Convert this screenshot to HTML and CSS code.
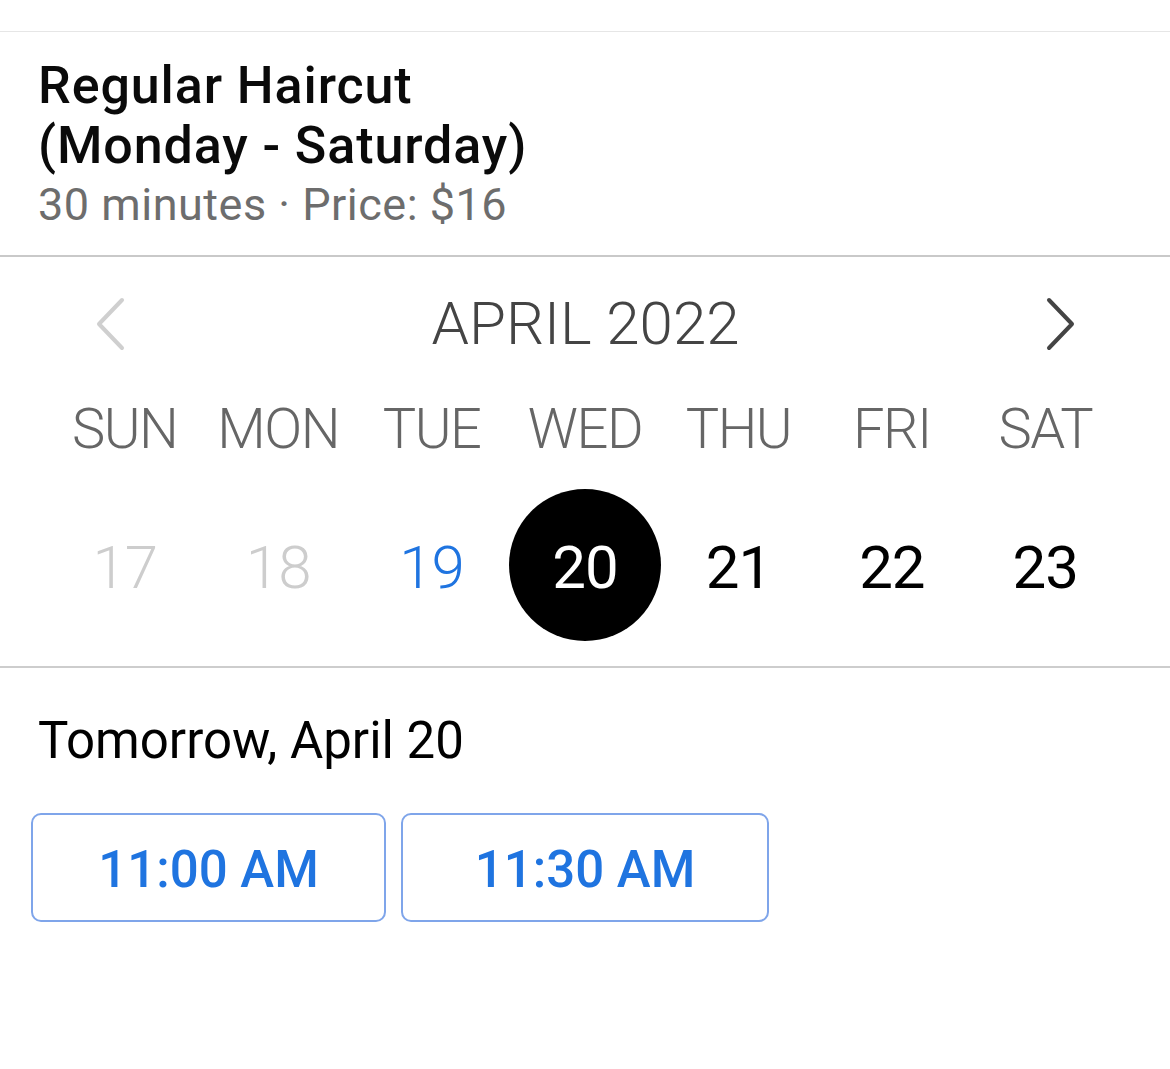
FILE: index.html
```html
<!DOCTYPE html>
<html lang="en">
<head>
    <meta charset="UTF-8">
    <meta name="viewport" content="width=device-width, initial-scale=1.0">
    <title>Book appointment</title>
    <link rel="stylesheet" href="styles.css">
</head>
<body>
    <div class="page">
        <div class="service">
            <div class="service-title">Regular Haircut<br>(Monday - Saturday)</div>
            <div class="service-meta">30 minutes · Price: $16</div>
        </div>

        <div class="calendar">
            <div class="month-bar">
                <button class="nav nav-prev" aria-label="Previous month">
                    <svg viewBox="0 0 32 54" width="32" height="54"><path d="M28 3 L5 27 L28 51" fill="none" stroke="currentColor" stroke-width="4" stroke-linecap="round" stroke-linejoin="round"/></svg>
                </button>
                <div class="month">APRIL 2022</div>
                <button class="nav nav-next" aria-label="Next month">
                    <svg viewBox="0 0 32 54" width="32" height="54"><path d="M4 3 L27 27 L4 51" fill="none" stroke="currentColor" stroke-width="4" stroke-linecap="round" stroke-linejoin="round"/></svg>
                </button>
            </div>

            <div class="week">
                <div class="weekday">SUN</div>
                <div class="weekday">MON</div>
                <div class="weekday">TUE</div>
                <div class="weekday">WED</div>
                <div class="weekday">THU</div>
                <div class="weekday">FRI</div>
                <div class="weekday">SAT</div>
            </div>

            <div class="week days">
                <div class="day day-past">17</div>
                <div class="day day-past">18</div>
                <div class="day day-today">19</div>
                <div class="day"><span class="day-selected">20</span></div>
                <div class="day">21</div>
                <div class="day">22</div>
                <div class="day">23</div>
            </div>
        </div>

        <div class="slots">
            <div class="slots-date">Tomorrow, April 20</div>
            <div class="slot-list">
                <button class="slot">11:00 AM</button>
                <button class="slot slot-wide">11:30 AM</button>
            </div>
        </div>
    </div>
</body>
</html>
```

FILE: styles.css
```css
* { margin: 0; padding: 0; box-sizing: border-box; }
body {
    font-family: Roboto, "Liberation Sans", Arial, sans-serif;
    background: #fff;
    color: #000;
}
.page {
    padding-top: 31px;
}
.service {
    border-top: 1px solid #e6e6e6;
    border-bottom: 2px solid #c9c9c9;
    padding: 24px 38px 21px;
}
.service-title {
    font-size: 52px;
    font-weight: 500;
    line-height: 60px;
    letter-spacing: 0.9px;
    color: #0a0a0a;
}
.service-meta {
    font-size: 45px;
    line-height: 58px;
    letter-spacing: 0.5px;
    color: #6d6d6d;
}
.calendar {
    border-bottom: 2px solid #cdcdcd;
    padding: 32px 48px 25px;
}
.month-bar {
    display: flex;
    align-items: center;
    justify-content: space-between;
    height: 70px;
    padding: 0 45px 0 46px;
}
.nav {
    background: none;
    border: none;
    display: flex;
    color: #444;
}
.nav-prev { color: #cfcfcf; }
.month {
    font-size: 60px;
    font-weight: 300;
    color: #444;
    line-height: 70px;
}
.week {
    display: grid;
    grid-template-columns: repeat(7, 1fr);
    text-align: center;
}
.weekday {
    margin-top: 35px;
    font-size: 56px;
    font-weight: 300;
    line-height: 70px;
    letter-spacing: -1.5px;
    color: #666;
}
.days {
    margin-top: 25px;
}
.day {
    display: flex;
    align-items: center;
    justify-content: center;
    height: 152px;
    padding-top: 4px;
    font-size: 60px;
    font-weight: 400;
    letter-spacing: -1px;
    color: #000;
}
.day-past { color: #cdcdcd; font-weight: 300; }
.day-today { color: #1f74e0; font-weight: 300; }
.day-selected {
    display: flex;
    align-items: center;
    justify-content: center;
    width: 152px;
    height: 152px;
    margin-top: -4px;
    padding-top: 4px;
    border-radius: 50%;
    background: #000;
    color: #fff;
}
.slots {
    padding: 43px 31px 0;
}
.slots-date {
    font-size: 51px;
    line-height: 60px;
    padding-left: 7px;
    color: #000;
}
.slot-list {
    display: flex;
    gap: 15px;
    margin-top: 42px;
}
.slot {
    width: 355px;
    height: 109px;
    padding-top: 4px;
    background: #fff;
    border: 2.5px solid #7fa5ea;
    border-radius: 10px;
    font-family: inherit;
    font-size: 51px;
    font-weight: 500;
    color: #1f74e0;
}
.slot-wide { width: 368px; }
```
